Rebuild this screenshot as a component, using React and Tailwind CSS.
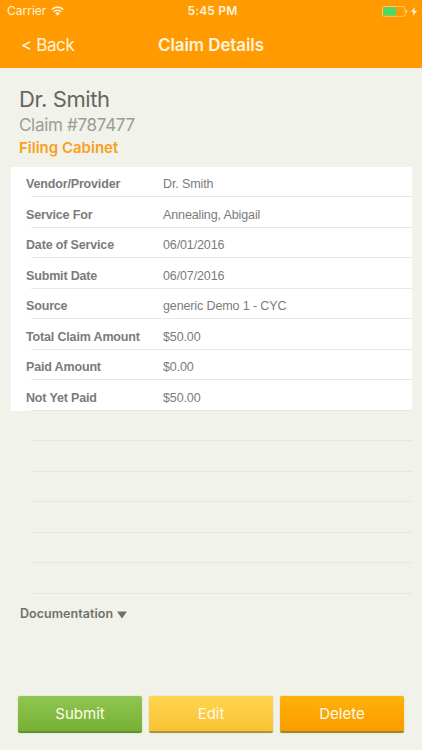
import React from "react";

const claimRows = [
  { label: "Vendor/Provider", value: "Dr. Smith" },
  { label: "Service For", value: "Annealing, Abigail" },
  { label: "Date of Service", value: "06/01/2016" },
  { label: "Submit Date", value: "06/07/2016" },
  { label: "Source", value: "generic Demo 1 - CYC" },
  { label: "Total Claim Amount", value: "$50.00" },
  { label: "Paid Amount", value: "$0.00" },
  { label: "Not Yet Paid", value: "$50.00" },
];

const emptyRows = [1, 2, 3, 4, 5, 6];

function StatusBar() {
  return (
    <div className="grid grid-cols-3 items-center h-[22px] pl-[7px] pr-[5px] text-[12px]">
      <div className="flex items-center gap-[5px]">
        <span>Carrier</span>
        <svg width="13" height="10" viewBox="0 0 13 10" fill="none" stroke="currentColor" strokeWidth="1.6">
          <path d="M0.7 3.5a8.3 8.3 0 0 1 11.6 0" />
          <path d="M2.7 5.8a5.4 5.4 0 0 1 7.6 0" />
          <path d="M6.5 9.6 4.2 7.4a3.2 3.2 0 0 1 4.6 0Z" fill="currentColor" stroke="none" />
        </svg>
      </div>
      <span className="pl-px text-center font-semibold tracking-[0.2px]">5:45 PM</span>
      <div className="flex items-center justify-end gap-[3px]">
        <svg width="26" height="11" viewBox="0 0 26 11">
          <rect x="0.5" y="0.5" width="22.5" height="9.8" rx="1.2" fill="none" stroke="#ffc670" />
          <rect x="1.3" y="1.3" width="12.7" height="8.2" fill="#4cd964" />
          <path d="M24 3.8c1.7.3 1.7 2.9 0 3.2Z" fill="#ffe0b0" />
        </svg>
        <svg width="6" height="9" viewBox="0 0 6 9" fill="currentColor">
          <path d="M3.8 0 0 5.1h2.5L1.8 9 6 3.7H3.4Z" />
        </svg>
      </div>
    </div>
  );
}

function Header() {
  return (
    <header className="h-[68px] bg-[#ff9b00] text-[#fff3dc]">
      <StatusBar />
      <div className="grid grid-cols-[1fr_auto_1fr] items-center h-[46px] pt-[2px] px-[21px] text-[17px]">
        <button className="justify-self-start tracking-[-0.4px]">&lt; Back</button>
        <h1 className="font-semibold tracking-[-0.1px]">Claim Details</h1>
      </div>
    </header>
  );
}

function ClaimRow({ label, value }) {
  return (
    <div className="relative flex items-center h-[30.5px] pl-[15px] pt-[6px] text-[12.5px] text-[#7b7b7b] whitespace-nowrap">
      <span className="w-[137px] font-bold tracking-[-0.16px]">{label}</span>
      <span className="tracking-[-0.12px]">{value}</span>
      <span className="absolute left-[20px] right-0 bottom-0 h-px bg-[#e8e9e6]" />
    </div>
  );
}

function ActionButton({ children, color }) {
  return (
    <button
      className={`h-[37px] pt-[2px] rounded-[2px] border-b-2 bg-linear-to-b text-[15px] text-[#fffbe8] shadow-[0_0_1px_#8a9a45] ${color}`}
    >
      {children}
    </button>
  );
}

function App() {
  return (
    <div className="flex flex-col w-[422px] h-[750px] overflow-hidden bg-[#f1f2ea] font-['Inter',sans-serif]">
      <Header />

      <section className="h-[98.5px] pl-[19px] pt-[17px] whitespace-nowrap">
        <h2 className="text-[22px] leading-[28px] tracking-[-0.4px] text-[#666761]">Dr. Smith</h2>
        <p className="text-[17px] leading-[24px] tracking-[-0.3px] text-[#9b9d96]">Claim #787477</p>
        <p className="pt-px text-[15px] leading-[20px] font-semibold text-[#f9a022]">Filing Cabinet</p>
      </section>

      <section className="ml-[11px] mr-[10px] font-['Liberation_Sans',Arial,sans-serif]">
        <div className="bg-white">
          {claimRows.map((row) => (
            <ClaimRow key={row.label} label={row.label} value={row.value} />
          ))}
        </div>
        {emptyRows.map((row) => (
          <div key={row} className="flex items-end h-[30.5px] pl-[20px]">
            <span className="w-full h-px bg-[#e5e7e1]" />
          </div>
        ))}
      </section>

      <button className="flex items-center gap-[4px] h-[40px] pl-[20px] pt-[2px] text-[12.5px] font-semibold tracking-[0.05px] text-[#70716c]">
        <span>Documentation</span>
        <svg width="10" height="8" viewBox="0 0 10 8" fill="currentColor">
          <path d="M0 0.5h10L5 7.5Z" />
        </svg>
      </button>

      <footer className="grid grid-cols-3 gap-[7px] mt-auto mb-[17px] pl-[18px] pr-[18px]">
        <ActionButton color="from-[#90c653] to-[#77b034] border-[#648f32]">Submit</ActionButton>
        <ActionButton color="from-[#ffd64d] to-[#f8c232] border-[#a99739]">Edit</ActionButton>
        <ActionButton color="from-[#ffb109] to-[#fa9c00] border-[#a0882a]">Delete</ActionButton>
      </footer>
    </div>
  );
}

export default App;
